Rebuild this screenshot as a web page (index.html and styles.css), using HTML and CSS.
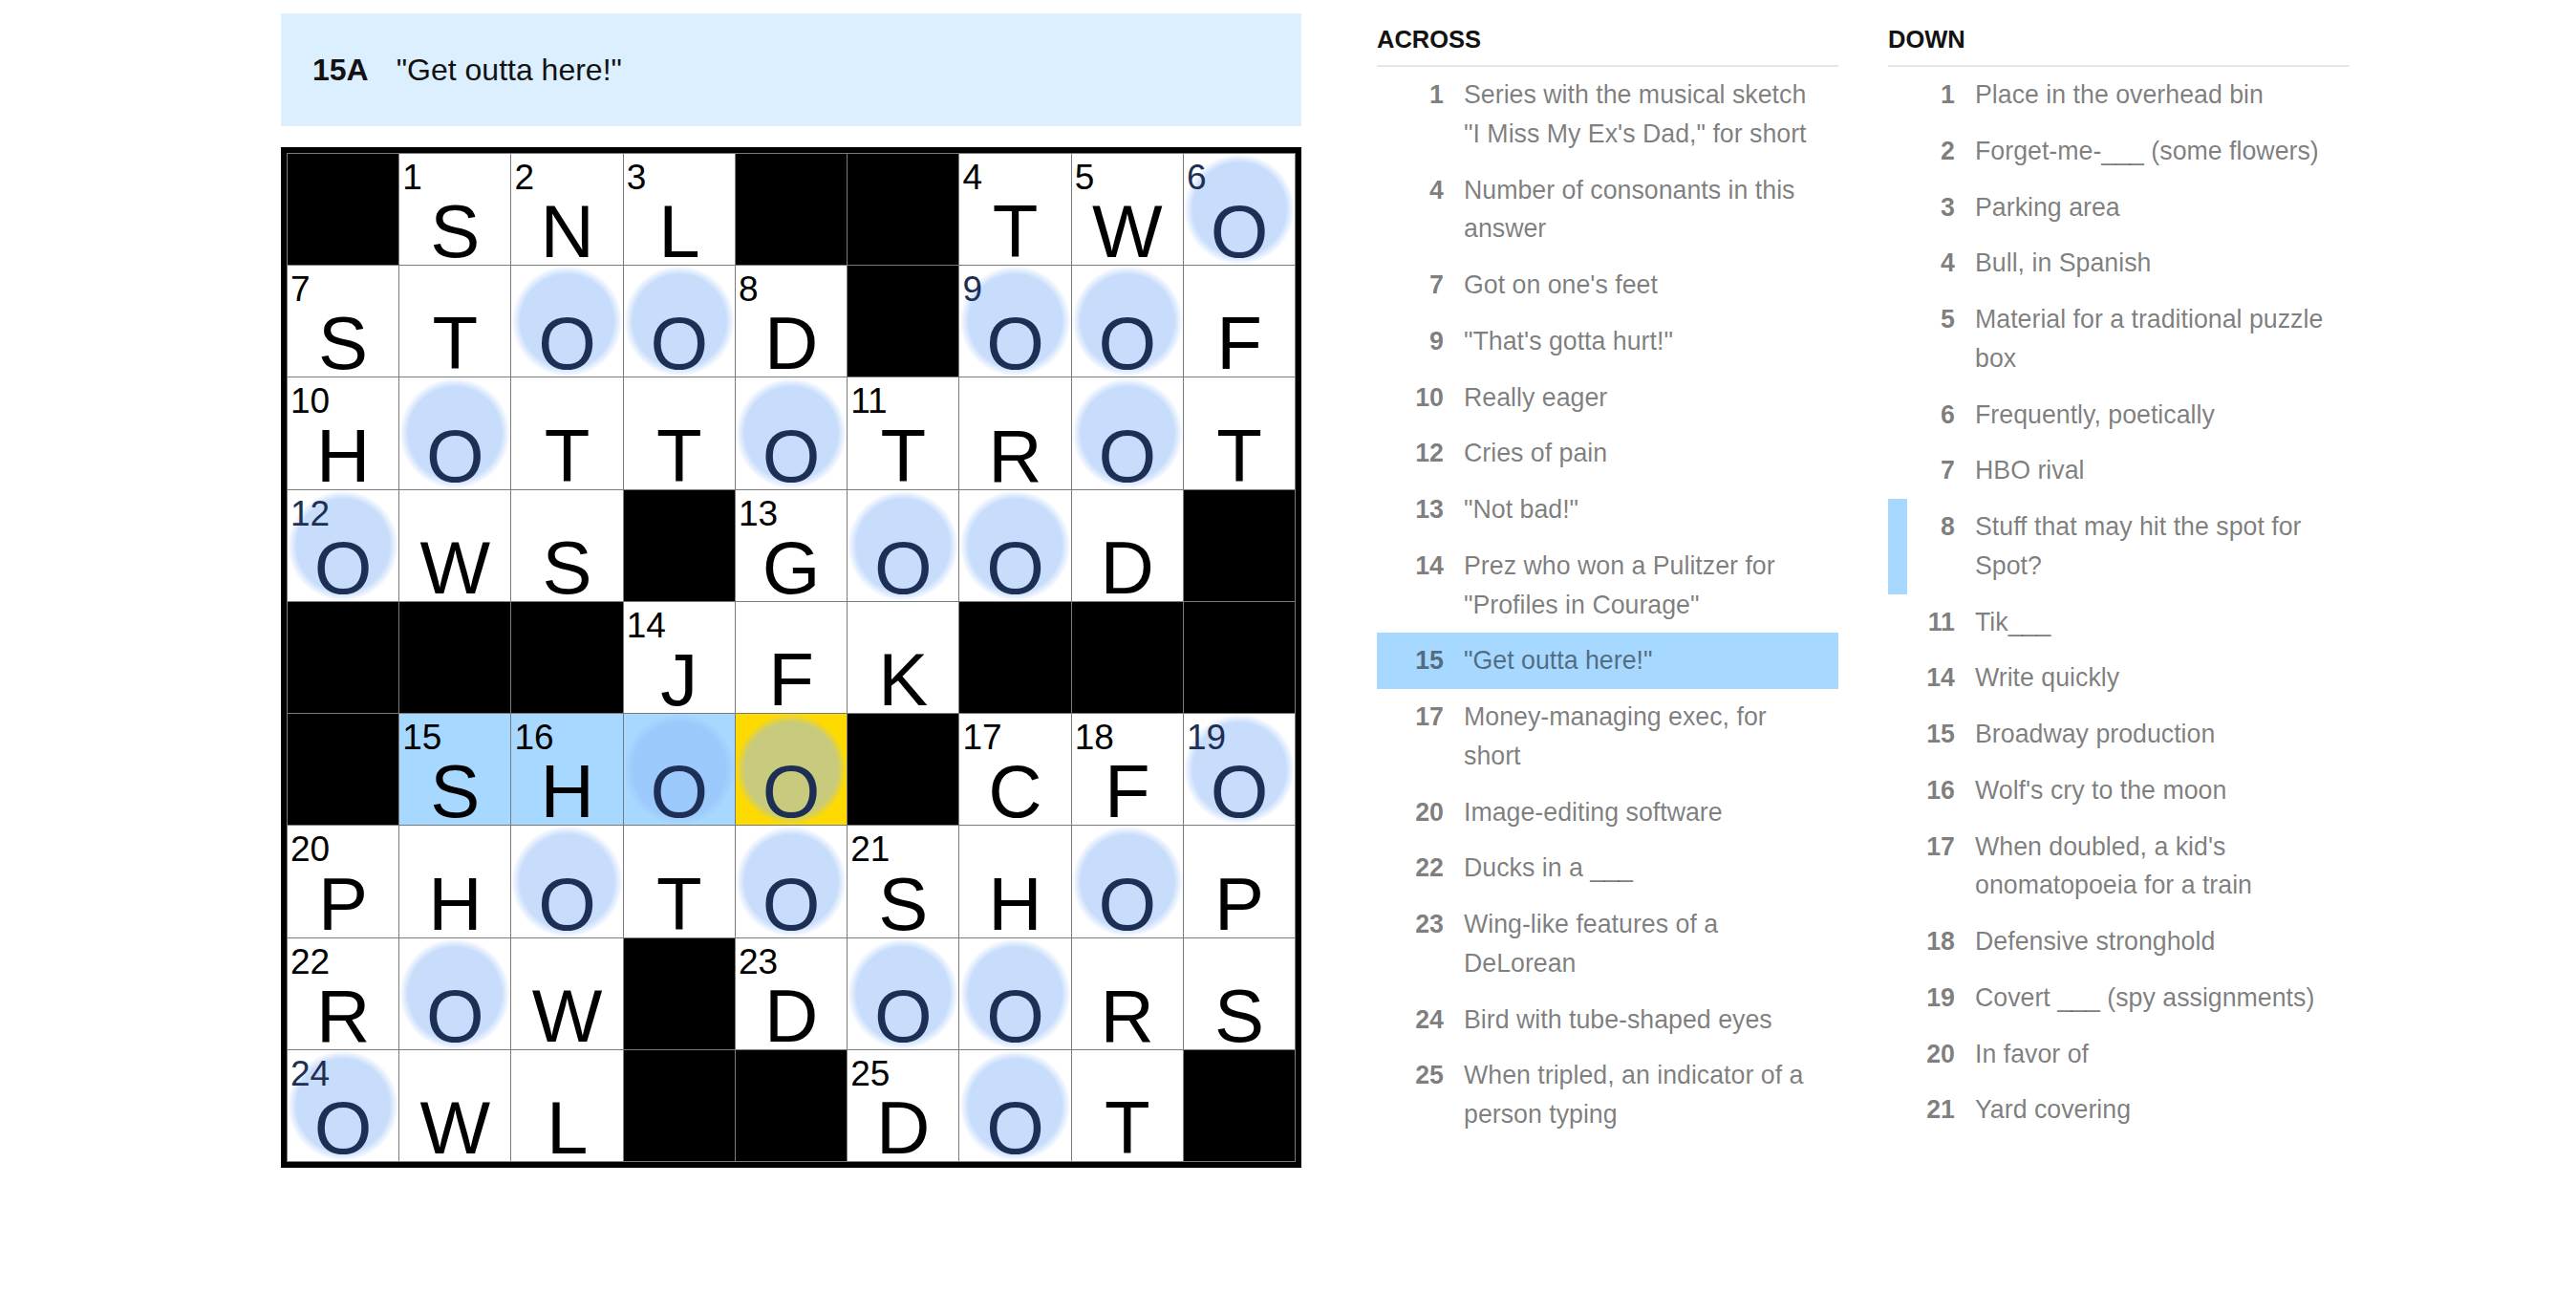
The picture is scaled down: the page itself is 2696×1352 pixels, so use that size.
FILE: index.html
```html
<!DOCTYPE html>
<html lang="en">
<head>
    <meta charset="UTF-8">
    <title>Mini crossword</title>
    <link rel="stylesheet" href="styles.css">
</head>
<body>
    <div class="page">
        <div class="puzzle">
            <div class="clue-bar">
                <span class="clue-bar-label">15A</span>
                <span class="clue-bar-text">"Get outta here!"</span>
            </div>
            <div class="board" id="board"></div>
        </div>

        <div class="clues">
            <div class="clue-col">
                <h3>Across</h3>
                <ol>
                    <li><span class="num">1</span><span class="text">Series with the musical sketch "I Miss My Ex's Dad," for short</span></li>
                    <li><span class="num">4</span><span class="text">Number of consonants in this answer</span></li>
                    <li><span class="num">7</span><span class="text">Got on one's feet</span></li>
                    <li><span class="num">9</span><span class="text">"That's gotta hurt!"</span></li>
                    <li><span class="num">10</span><span class="text">Really eager</span></li>
                    <li><span class="num">12</span><span class="text">Cries of pain</span></li>
                    <li><span class="num">13</span><span class="text">"Not bad!"</span></li>
                    <li><span class="num">14</span><span class="text">Prez who won a Pulitzer for "Profiles in Courage"</span></li>
                    <li class="selected"><span class="num">15</span><span class="text">"Get outta here!"</span></li>
                    <li><span class="num">17</span><span class="text">Money-managing exec, for short</span></li>
                    <li><span class="num">20</span><span class="text">Image-editing software</span></li>
                    <li><span class="num">22</span><span class="text">Ducks in a ___</span></li>
                    <li><span class="num">23</span><span class="text">Wing-like features of a DeLorean</span></li>
                    <li><span class="num">24</span><span class="text">Bird with tube-shaped eyes</span></li>
                    <li><span class="num">25</span><span class="text">When tripled, an indicator of a person typing</span></li>
                </ol>
            </div>
            <div class="clue-col">
                <h3>Down</h3>
                <ol>
                    <li><span class="num">1</span><span class="text">Place in the overhead bin</span></li>
                    <li><span class="num">2</span><span class="text">Forget-me-___ (some flowers)</span></li>
                    <li><span class="num">3</span><span class="text">Parking area</span></li>
                    <li><span class="num">4</span><span class="text">Bull, in Spanish</span></li>
                    <li><span class="num">5</span><span class="text">Material for a traditional puzzle box</span></li>
                    <li><span class="num">6</span><span class="text">Frequently, poetically</span></li>
                    <li><span class="num">7</span><span class="text">HBO rival</span></li>
                    <li class="related"><span class="num">8</span><span class="text">Stuff that may hit the spot for Spot?</span></li>
                    <li><span class="num">11</span><span class="text">Tik___</span></li>
                    <li><span class="num">14</span><span class="text">Write quickly</span></li>
                    <li><span class="num">15</span><span class="text">Broadway production</span></li>
                    <li><span class="num">16</span><span class="text">Wolf's cry to the moon</span></li>
                    <li><span class="num">17</span><span class="text">When doubled, a kid's onomatopoeia for a train</span></li>
                    <li><span class="num">18</span><span class="text">Defensive stronghold</span></li>
                    <li><span class="num">19</span><span class="text">Covert ___ (spy assignments)</span></li>
                    <li><span class="num">20</span><span class="text">In favor of</span></li>
                    <li><span class="num">21</span><span class="text">Yard covering</span></li>
                </ol>
            </div>
        </div>
    </div>

    <script>
        // # = black square, lowercase o = circled square
        const rows = [
            '#SNL##TWo',
            'STooD#ooF',
            'HoTToTRoT',
            'oWS#GooD#',
            '###JFK###',
            '#SHoo#CFo',
            'PHoToSHoP',
            'RoW#DooRS',
            'oWL##DoT#'
        ];

        const numbers = {
            '0,1': 1, '0,2': 2, '0,3': 3, '0,6': 4, '0,7': 5, '0,8': 6,
            '1,0': 7, '1,4': 8, '1,6': 9,
            '2,0': 10, '2,5': 11,
            '3,0': 12, '3,4': 13,
            '4,3': 14,
            '5,1': 15, '5,2': 16, '5,6': 17, '5,7': 18, '5,8': 19,
            '6,0': 20, '6,5': 21,
            '7,0': 22, '7,4': 23,
            '8,0': 24, '8,5': 25
        };

        const highlighted = ['5,1', '5,2', '5,3'];
        const selected = '5,4';

        const board = document.getElementById('board');
        rows.forEach((row, r) => {
            row.split('').forEach((ch, c) => {
                const key = r + ',' + c;
                const cell = document.createElement('div');
                cell.className = 'cell';
                if (ch === '#') {
                    cell.classList.add('block');
                    board.appendChild(cell);
                    return;
                }
                if (ch === 'o') cell.classList.add('circled');
                if (highlighted.includes(key)) cell.classList.add('highlighted');
                if (key === selected) cell.classList.add('selected');

                if (numbers[key]) {
                    const n = document.createElement('span');
                    n.className = 'cell-num';
                    n.textContent = numbers[key];
                    cell.appendChild(n);
                }
                const letter = document.createElement('span');
                letter.className = 'letter';
                letter.textContent = ch.toUpperCase();
                cell.appendChild(letter);
                board.appendChild(cell);
            });
        });
    </script>
</body>
</html>
```

FILE: styles.css
```css
body {
    margin: 0;
    background: #fff;
    font-family: 'Liberation Sans', Arial, sans-serif;
    color: #121212;
}

.page {
    display: flex;
    align-items: flex-start;
    padding-left: 294px;
}

.puzzle {
    width: 1068px;
    padding-top: 14px;
}

/* current clue above the grid */
.clue-bar {
    height: 118px;
    background: #dcefff;
    display: flex;
    align-items: center;
    padding-left: 33px;
    font-size: 32px;
}

.clue-bar-label {
    font-weight: bold;
    min-width: 58px;
    margin-right: 29px;
}

.board {
    margin-top: 22px;
    box-sizing: border-box;
    width: 1068px;
    border: 6px solid #000;
    background: #7b7b7b;
    padding: 1px;
    display: grid;
    grid-template-columns: repeat(9, 1fr);
    gap: 1px;
}

.cell {
    position: relative;
    aspect-ratio: 1;
    background-color: #fff;
    display: flex;
    align-items: flex-end;
    justify-content: center;
    color: #000;
}

.cell.block {
    background-color: #000;
}

.cell.highlighted {
    background-color: #a7d8ff;
}

.cell.selected {
    background-color: #ffda00;
}

.cell.circled {
    background-image: radial-gradient(circle closest-side, rgba(145, 187, 248, 0.5) 84%, rgba(145, 187, 248, 0) 100%);
    color: #1d2f54;
}

.cell-num {
    position: absolute;
    top: 6px;
    left: 3px;
    font-size: 37px;
    line-height: 37px;
}

.letter {
    font-size: 78px;
    line-height: 70px;
}

/* clue lists */
.clues {
    display: flex;
    gap: 52px;
    margin-left: 79px;
}

.clue-col {
    width: 483px;
}

.clue-col h3 {
    margin: 0;
    padding: 26px 0 12px;
    font-size: 25.5px;
    line-height: 30px;
    text-transform: uppercase;
    font-weight: bold;
    color: #121212;
    border-bottom: 2px solid #e6e6e6;
}

.clue-col ol {
    list-style: none;
    margin: 0;
    padding: 0;
}

.clue-col li {
    display: flex;
    border-left: 20px solid transparent;
    padding: 9px 19px 9px 0;
    font-size: 26.75px;
    line-height: 40.75px;
    color: rgba(0, 0, 0, 0.52);
}

.clue-col li .num {
    flex: none;
    width: 50px;
    margin-right: 21px;
    text-align: right;
    font-weight: bold;
}

.clue-col li.selected {
    background: #a7d8ff;
    border-left-color: #a7d8ff;
}

.clue-col li.related {
    border-left-color: #a7d8ff;
}
```
